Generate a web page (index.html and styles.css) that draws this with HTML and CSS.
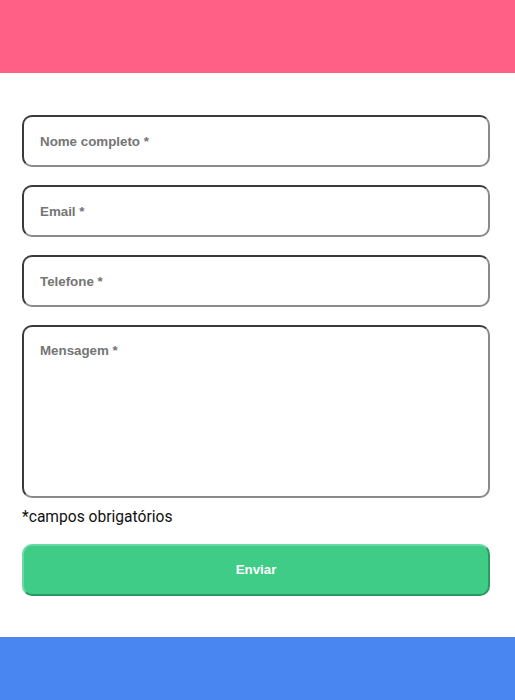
FILE: index.html
```html
<!DOCTYPE html>
<html lang="pt">
<head>
<meta charset="utf-8">
<title>Contato</title>
<link rel="stylesheet" href="styles.css">
</head>
<body>
<header class="top"></header>
<main class="content">
  <form class="form">
    <input class="field" type="text" placeholder="Nome completo *">
    <input class="field" type="email" placeholder="Email *">
    <input class="field" type="tel" placeholder="Telefone *">
    <textarea class="field area" placeholder="Mensagem *"></textarea>
    <p class="note">*campos obrigatórios</p>
    <button class="send" type="button">Enviar</button>
  </form>
</main>
<footer class="bottom"></footer>
</body>
</html>
```
FILE: styles.css
```css
html, body {
  margin: 0;
  padding: 0;
  background: #ffffff;
}
.top {
  height: 73px;
  background: #ff6086;
}
.content {
  padding: 42px 25px 41px 22px;
}
.form {
  display: flex;
  flex-direction: column;
  margin: 0;
}
.field {
  box-sizing: border-box;
  width: 100%;
  height: 52px;
  margin: 0 0 18px 0;
  padding: 0 16px;
  border-width: 2px;
  border-style: solid;
  border-color: #3a3a3a #8a8a8a #8a8a8a #3a3a3a;
  border-radius: 10px;
  background: #fff;
  font-family: "Liberation Sans", Arial, sans-serif;
  font-weight: bold;
  font-size: 13.333px;
  color: #333;
  outline: none;
}
.field::placeholder {
  color: #757575;
  opacity: 1;
}
.area {
  display: block;
  height: 173px;
  margin-bottom: 0;
  padding-top: 16px;
  resize: none;
}
.note {
  margin: 10px 0 17px 0;
  font-family: Roboto, "Liberation Sans", sans-serif;
  font-size: 15.6px;
  line-height: 19px;
  color: #111;
}
.send {
  box-sizing: border-box;
  width: 100%;
  height: 52px;
  border-width: 2px;
  border-style: solid;
  border-color: #6ad9a4 #2a9a62 #2a9a62 #6ad9a4;
  border-radius: 10px;
  background: #3ecc87;
  color: #ffffff;
  font-family: "Liberation Sans", Arial, sans-serif;
  font-weight: bold;
  font-size: 13.333px;
  padding: 0 0 1px 0;
  cursor: pointer;
}
.bottom {
  height: 63px;
  background: #4a86f2;
}
```
